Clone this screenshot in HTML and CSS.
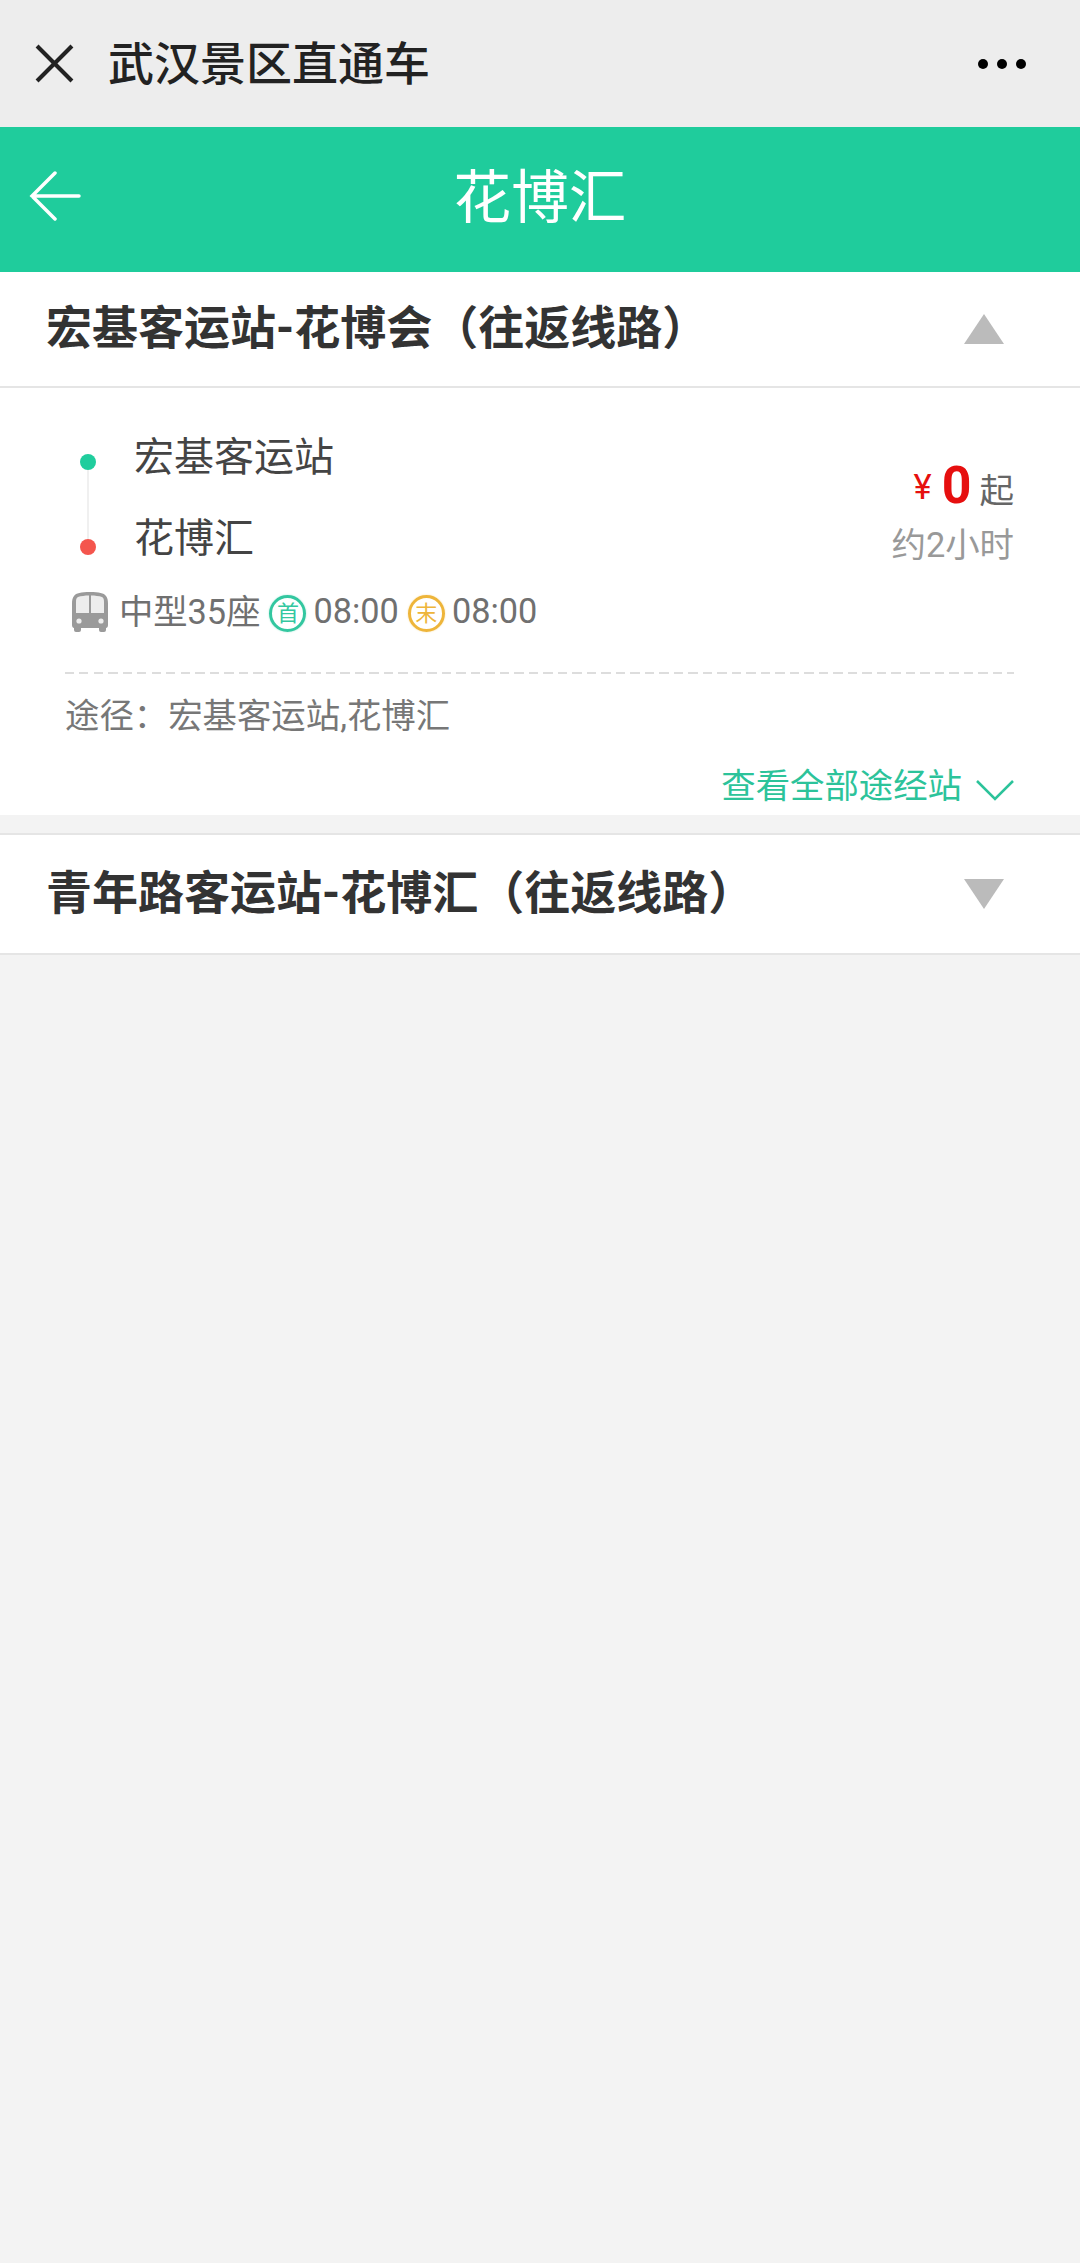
FILE: index.html
```html
<!DOCTYPE html>
<html lang="zh-CN">
<head>
<meta charset="utf-8">
<title>武汉景区直通车</title>
<link rel="stylesheet" href="styles.css">
</head>
<body>
<header class="wechat-bar">
  <svg class="close-icon" viewBox="0 0 38 38"><path d="M2 2 36 36M36 2 2 36"/></svg>
  <div class="wechat-title">武汉景区直通车</div>
  <div class="more"><i></i><i></i><i></i></div>
</header>
<nav class="app-bar">
  <svg class="back-icon" viewBox="0 0 52 50"><path d="M26 2 3 25 26 48M3 25H50"/></svg>
  <div class="app-title">花博汇</div>
</nav>
<main>
  <section class="line">
    <div class="line-head">
      <h2>宏基客运站-花博会（往返线路）</h2>
      <span class="tri tri-up"></span>
    </div>
    <div class="line-body">
      <div class="trip">
        <div class="trip-left">
          <div class="route">
            <div class="rail"><i class="dot dot-start"></i><i class="rail-line"></i><i class="dot dot-end"></i></div>
            <div class="stops"><div>宏基客运站</div><div>花博汇</div></div>
          </div>
          <div class="meta">
            <svg class="bus" viewBox="0 0 36 40"><path d="M18 0c9 0 14 1 16 4 1.500 2 2 4 2 8v21c0 2-1 3-2 3v2a2 2 0 0 1-2 2h-3a2 2 0 0 1-2-2v-2H9v2a2 2 0 0 1-2 2H4a2 2 0 0 1-2-2v-2c-1 0-2-1-2-3V12c0-4 .5-6 2-8C4 1 9 0 18 0Z" fill="#9a9a9a"/><path d="M6 5c3-1 7-1.500 11-1.500V21H4V10c0-3 .5-4.300 2-5ZM30 5c-3-1-7-1.500-11-1.500V21h13V10c0-3-.5-4.300-2-5Z" fill="#ededed"/><circle cx="7" cy="29" r="2.600" fill="#ededed"/><circle cx="29" cy="29" r="2.600" fill="#ededed"/></svg>
            <span class="seat">中型35座</span>
            <span class="badge badge-first">首</span>
            <span class="time">08:00</span>
            <span class="badge badge-last">末</span>
            <span class="time">08:00</span>
          </div>
        </div>
        <div class="trip-right">
          <div class="price"><span class="yen">¥</span><span class="amount">0</span><span class="from">起</span></div>
          <div class="duration">约2小时</div>
        </div>
      </div>
      <div class="dash"></div>
      <div class="via">途径：宏基客运站,花博汇</div>
      <div class="see-all">查看全部途经站<svg class="chevron" viewBox="0 0 38 22"><path d="M1 2 19 20 37 2"/></svg></div>
    </div>
  </section>
  <section class="line line-second">
    <div class="line-head">
      <h2>青年路客运站-花博汇（往返线路）</h2>
      <span class="tri tri-down"></span>
    </div>
  </section>
</main>
</body>
</html>
```
FILE: styles.css
```css
* { box-sizing: border-box; }
html, body { margin: 0; height: 100%; }
body {
  background: #f3f3f3;
  font-family: Roboto, "Noto Sans CJK SC", sans-serif;
  color: #333;
}
.wechat-bar {
  height: 127px;
  background: #ededed;
  display: flex;
  align-items: center;
  padding: 0 54px 0 35px;
}
.close-icon { width: 39px; height: 39px; fill: none; stroke: #222; stroke-width: 4; }
.wechat-title { margin-left: 34px; padding-bottom: 8px; font-size: 46px; font-weight: 500; color: #222; flex: 1; }
.more { display: flex; gap: 9px; }
.more i { width: 10px; height: 10px; border-radius: 50%; background: #000; }
.app-bar {
  height: 145px;
  background: #1fcc9c;
  display: flex;
  align-items: center;
  position: relative;
  padding: 0 0 8px 29px;
}
.back-icon { width: 52px; height: 50px; fill: none; stroke: #fff; stroke-width: 3.5; stroke-linecap: round; }
.app-title {
  position: absolute;
  left: 0;
  right: 0;
  text-align: center;
  font-size: 57.6px;
  color: #fff;
  padding-bottom: 6px;
}
.line-head {
  height: 116px;
  background: #fff;
  border-bottom: 2px solid #e5e5e5;
  display: flex;
  align-items: center;
  justify-content: space-between;
  padding: 0 76px 0 46px;
}
.line-head h2 { margin: 0; padding-bottom: 11px; font-size: 46px; font-weight: 700; color: #333; }
.tri { width: 0; height: 0; border-left: 20px solid transparent; border-right: 20px solid transparent; }
.tri-up { border-bottom: 30px solid #bbb; }
.tri-down { border-top: 30px solid #bbb; }
.line-body { background: #fff; height: 427px; padding: 26px 66px 0 65px; }
.trip { display: flex; justify-content: space-between; }
.route { display: flex; height: 164px; }
.rail {
  width: 16px;
  margin-left: 15px;
  padding: 40px 0 23px;
  display: flex;
  flex-direction: column;
  align-items: center;
}
.dot { width: 16px; height: 16px; border-radius: 50%; flex: none; }
.dot-start { background: #20cd9d; }
.dot-end { background: #f4554d; }
.rail-line { width: 2px; flex: 1; background: #f0f0f0; }
.stops { margin-left: 38px; padding-top: 3px; font-size: 40px; line-height: 81px; color: #444; }
.meta {
  display: flex;
  align-items: center;
  margin-top: 14px;
  height: 40px;
  font-size: 34.3px;
  color: #707070;
  white-space: nowrap;
}
.bus { width: 36px; height: 40px; margin-left: 7px; }
.seat { margin: 0 0 6px 11px; }
.time { margin-bottom: 2px; }
.badge {
  width: 37px;
  height: 37px;
  border-radius: 50%;
  border: 3px solid;
  font-size: 22px;
  line-height: 31px;
  text-align: center;
  margin: 3px 7px 0 9px;
  flex: none;
}
.badge-first { color: #33c7a0; box-shadow: 0 0 2px #a5e8d4; }
.badge-last { color: #eeb53a; box-shadow: 0 0 2px #f8dfa5; }
.trip-right { padding-top: 41px; text-align: right; }
.price { height: 65px; }
.yen { font-size: 34.56px; color: #e60f0f; vertical-align: 4px; }
.amount { font-size: 51.84px; font-weight: 700; color: #e60f0f; margin-left: 10px; }
.from { font-size: 34.56px; color: #666; margin-left: 8px; }
.duration { font-size: 34.4px; color: #999; line-height: 50px; }
.dash {
  height: 2px;
  margin-top: 40px;
  background: repeating-linear-gradient(90deg, #ddd 0 9px, transparent 9px 14.5px);
}
.via { margin-top: 17px; font-size: 34.4px; line-height: 50px; color: #777; }
.see-all {
  margin-top: 20px;
  font-size: 34.4px;
  line-height: 50px;
  color: #2cc39a;
  display: flex;
  align-items: center;
  justify-content: flex-end;
}
.chevron { width: 38px; height: 22px; margin-left: 14px; margin-top: 8px; fill: none; stroke: #2cc39a; stroke-width: 2.5; }
.line-second { margin-top: 18px; border-top: 2px solid #e5e5e5; }
.line-second .line-head { height: 120px; }
```
